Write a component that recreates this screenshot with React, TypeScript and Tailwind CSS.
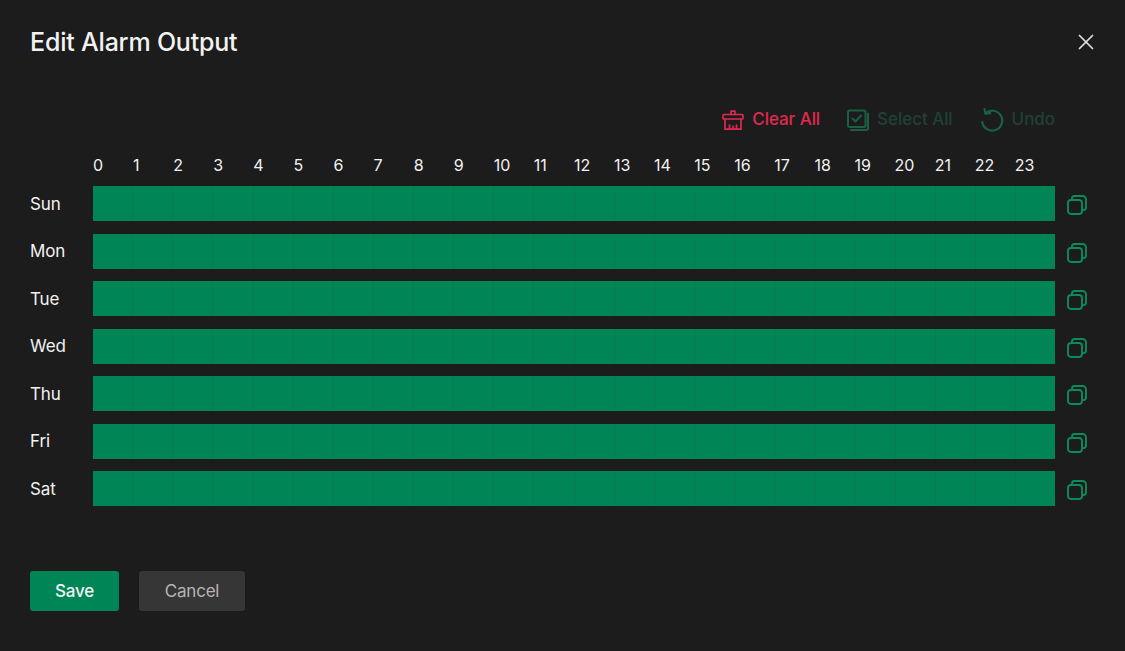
import React from "react";
import { X } from "lucide-react";

const days = ["Sun", "Mon", "Tue", "Wed", "Thu", "Fri", "Sat"];
const hours = Array.from({ length: 24 }, (_, i) => i);

function BrushIcon() {
  return (
    <svg width="22" height="22" viewBox="0 0 22 22" fill="none" stroke="currentColor" strokeWidth="1.7" strokeLinejoin="round" strokeLinecap="round">
      <path d="M9 5.5V2.2h4v3.3" />
      <rect x="1" y="5.5" width="20" height="4.5" rx="1" />
      <path d="M3 10v10.2h16V10" />
      <path d="M7.500 20v-4M11 20v-3M14.500 20v-4" />
    </svg>
  );
}

function SelectIcon() {
  return (
    <svg width="22" height="22" viewBox="0 0 22 22" fill="none" stroke="currentColor" strokeWidth="2" strokeLinejoin="round" strokeLinecap="round">
      <rect x="1" y="1.500" width="17.500" height="16.500" rx="1.500" />
      <path d="M5.500 9.500l3 3 5.500-6" />
      <path d="M21 4.500v15a1.500 1.500 0 0 1-1.500 1.500H4" />
    </svg>
  );
}

function UndoIcon() {
  return (
    <svg width="24" height="24" viewBox="0 0 24 24" fill="none" stroke="currentColor" strokeWidth="2.2" strokeLinejoin="round" strokeLinecap="round">
      <path d="M5.500 5.200A10 10 0 1 1 2.300 14" />
      <path d="M4.600 1.200l.9 4.500 4.600-.6" />
    </svg>
  );
}

function CopyIcon() {
  return (
    <svg width="22" height="22" viewBox="0 0 22 22" fill="none" stroke="#0d8a5c" strokeWidth="1.9" strokeLinejoin="round">
      <rect x="2" y="6" width="14" height="14" rx="3" />
      <path d="M6 6V4.500A2.500 2.500 0 0 1 8.500 2h8A3.500 3.500 0 0 1 20 5.500v8a2.500 2.500 0 0 1-2.500 2.500H16" />
    </svg>
  );
}

export default function App() {
  return (
    <div className="flex h-[651px] w-[1125px] flex-col overflow-hidden bg-[#1c1c1c] px-[30px] font-['Inter',sans-serif] text-[#f2f2f2]">
      <div className="flex h-[86px] items-center justify-between">
        <h1 className="text-[25px] font-medium tracking-[-0.2px]">Edit Alarm Output</h1>
        <X className="mb-[2px] mr-[-4px] h-[26px] w-[26px] text-[#e0e0e0]" strokeWidth={1.6} />
      </div>

      <div className="mt-[17px] flex h-[34px] items-center justify-end gap-[27px] pr-[40px] text-[17px] font-medium tracking-[-0.05px]">
        <div className="flex items-center gap-[8px] text-[#e0294f]">
          <BrushIcon />
          <span>Clear All</span>
        </div>
        <div className="flex items-center gap-[8px] text-[#1b5f45]">
          <SelectIcon />
          <span className="text-[#1f4235]">Select All</span>
        </div>
        <div className="flex items-center gap-[8px] text-[#1b5f45]">
          <UndoIcon />
          <span className="text-[#1f4235]">Undo</span>
        </div>
      </div>

      <div className="mt-[16px] flex h-[24px] items-center pl-[63px] pr-[40px]">
        {hours.map((h) => (
          <span key={h} className="flex-1 text-[16px] font-normal">
            {h}
          </span>
        ))}
      </div>

      <div className="mt-[9px] flex flex-col gap-[12.5px]">
        {days.map((d) => (
          <div key={d} className="flex h-[35px] items-center">
            <span className="w-[63px] pt-[2px] text-[17px] tracking-[-0.1px]">{d}</span>
            <div className="flex h-full flex-1">
              {hours.map((h) => (
                <div key={h} className="flex-1 border-r border-[#077c54] bg-[#008557] last:border-r-0" />
              ))}
            </div>
            <div className="flex w-[40px] justify-start pl-[11px] pt-[3px]">
              <CopyIcon />
            </div>
          </div>
        ))}
      </div>

      <div className="mt-[65px] flex gap-[20px]">
        <button className="h-[40px] w-[89px] rounded-[3px] bg-[#008557] pt-[2px] text-[17px] font-medium tracking-[-0.2px] text-[#f2f2f2]">
          Save
        </button>
        <button className="h-[40px] w-[106px] rounded-[3px] bg-[#363636] pt-[2px] text-[17px] tracking-[-0.2px] text-[#b5b5b5]">
          Cancel
        </button>
      </div>
    </div>
  );
}
